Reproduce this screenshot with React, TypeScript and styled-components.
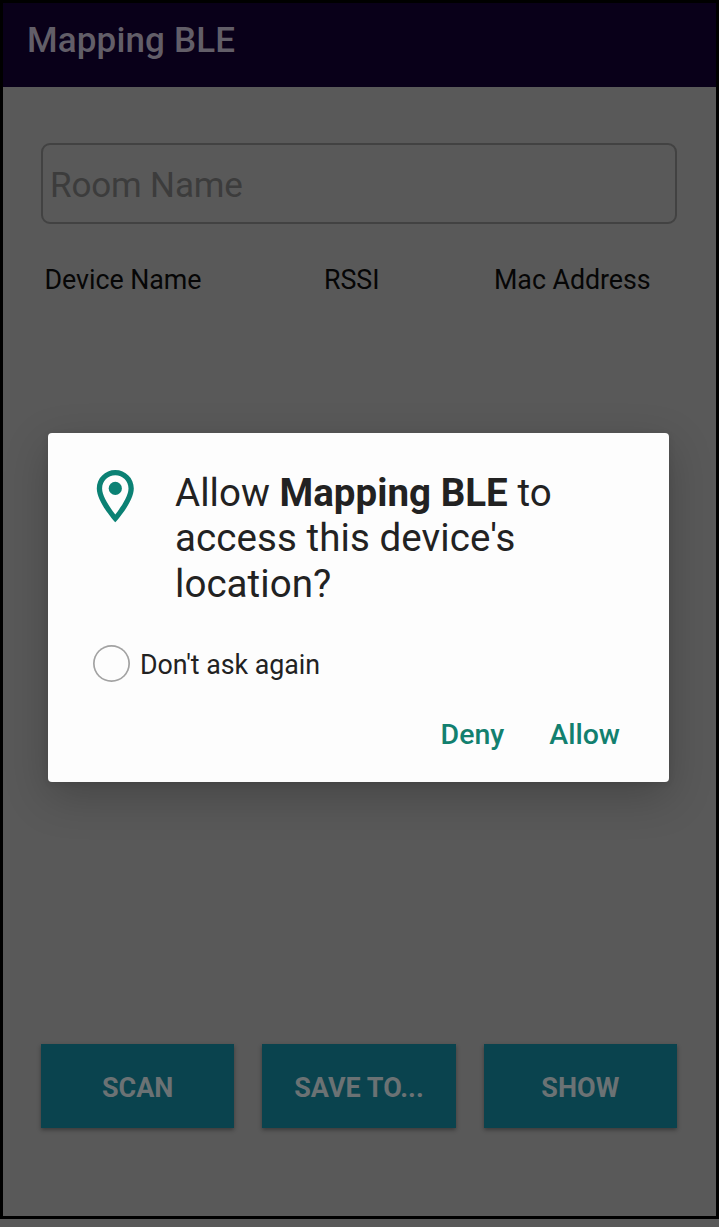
import React from "react";
import styled, { createGlobalStyle } from "styled-components";

const GlobalStyle = createGlobalStyle`
  *, *::before, *::after { box-sizing: border-box; }
  body {
    margin: 0;
    background: #595959;
    font-family: Roboto, "Liberation Sans", sans-serif;
  }
`;

const Page = styled.div`
  height: 1227px;
  width: 719px;
  background: #595959;
`;

const Screen = styled.main`
  position: relative;
  display: flex;
  flex-direction: column;
  height: 1219px;
  border: 3px solid #000;
  background: #595959;
`;

const AppBar = styled.header`
  height: 84px;
  padding: 17px 24px 0;
  background: #090019;
`;

const AppTitle = styled.h1`
  margin: 0;
  font-size: 35px;
  line-height: 42px;
  font-weight: 500;
  letter-spacing: 0.15px;
  color: #625e68;
`;

const Content = styled.div`
  flex: 1;
  display: flex;
  flex-direction: column;
  padding: 56px 39px 88px 38px;
`;

const RoomInput = styled.input`
  height: 81px;
  width: 100%;
  padding: 3px 7px 0;
  border: 2px solid #424242;
  border-radius: 9px;
  background: transparent;
  font: 400 35px Roboto, sans-serif;
  letter-spacing: -0.15px;
  outline: none;
  &::placeholder {
    color: #3c3c3c;
    opacity: 1;
  }
`;

const TableHead = styled.div`
  display: grid;
  grid-template-columns: 279.5px 170px 1fr;
  margin-top: 40px;
  padding-left: 3.5px;
  font-size: 26.8px;
  line-height: 32px;
  letter-spacing: -0.04px;
  color: #060606;
`;

const HeadCell = styled.span`
  white-space: nowrap;
`;

const Actions = styled.div`
  display: grid;
  grid-template-columns: repeat(3, 1fr);
  gap: 28px;
  margin-top: auto;
`;

const ActionButton = styled.button`
  height: 84px;
  padding: 3px 0 0;
  border: 0;
  background: #0a434e;
  box-shadow: 0 2px 4px rgba(0, 0, 0, 0.35);
  font: 700 27px Roboto, sans-serif;
  color: #6b7274;
`;

const Dialog = styled.section`
  position: absolute;
  top: 430px;
  left: 45px;
  width: 621px;
  height: 349px;
  display: flex;
  flex-direction: column;
  padding: 37px 49px 24px 45px;
  border-radius: 4px;
  background: #fdfdfd;
  box-shadow: 0 14px 44px rgba(0, 0, 0, 0.22), 0 2px 6px rgba(0, 0, 0, 0.1);
  color: #222;
`;

const Prompt = styled.div`
  display: flex;
  align-items: flex-start;
`;

const Pin = styled.svg`
  flex: none;
  width: 38px;
  height: 53px;
  margin: 0 41px 0 3px;
`;

const Question = styled.h2`
  margin: 0;
  font-size: 38.5px;
  line-height: 45.3px;
  font-weight: 400;
  white-space: nowrap;
  b {
    font-weight: 700;
  }
`;

const QuestionLine = styled.span<{ $spacing: number }>`
  display: block;
  letter-spacing: ${(p) => p.$spacing}px;
`;

const AskAgain = styled.label`
  display: flex;
  align-items: center;
  gap: 10px;
  margin-top: 39px;
  height: 37px;
  font-size: 26.8px;
  letter-spacing: -0.04px;
`;

const AskLabel = styled.span`
  padding-top: 3px;
`;

const Radio = styled.span`
  width: 37px;
  height: 37px;
  border-radius: 50%;
  box-shadow: inset 0 0 0 1.7px #a2a2a2;
`;

const DialogActions = styled.div`
  display: flex;
  justify-content: flex-end;
  gap: 45px;
  margin-top: auto;
`;

const TextButton = styled.button`
  padding: 0;
  border: 0;
  background: none;
  font: 500 28.5px/46px Roboto, sans-serif;
  color: #12806f;
`;

export default function App() {
  return (
    <Page>
      <GlobalStyle />
      <Screen>
        <AppBar>
          <AppTitle>Mapping BLE</AppTitle>
        </AppBar>
        <Content>
          <RoomInput placeholder="Room Name" />
          <TableHead>
            <HeadCell>Device Name</HeadCell>
            <HeadCell>RSSI</HeadCell>
            <HeadCell>Mac Address</HeadCell>
          </TableHead>
          <Actions>
            <ActionButton>SCAN</ActionButton>
            <ActionButton>SAVE TO...</ActionButton>
            <ActionButton>SHOW</ActionButton>
          </Actions>
        </Content>
        <Dialog role="dialog">
          <Prompt>
            <Pin viewBox="0 0 38 53" fill="none">
              <path
                fillRule="evenodd"
                d="M19.3 0C9 0 0.8 8.2 0.8 18.5C0.8 32.4 19.3 52.3 19.3 52.3C19.3 52.3 37.8 32.4 37.8 18.5C37.8 8.2 29.6 0 19.3 0ZM6.1 18.5C6.1 11.2 12 5.3 19.3 5.3C26.6 5.3 32.5 11.2 32.5 18.5C32.5 26.1 24.9 37.4 19.3 44.5C13.8 37.5 6.1 26 6.1 18.5Z"
                fill="#0b8174"
              />
              <circle cx="19.3" cy="18.4" r="6.6" fill="#0b8174" />
            </Pin>
            <Question>
              <QuestionLine $spacing={0.03}>
                Allow <b>Mapping BLE</b> to
              </QuestionLine>
              <QuestionLine $spacing={0.08}>access this device's</QuestionLine>
              <QuestionLine $spacing={0.05}>location?</QuestionLine>
            </Question>
          </Prompt>
          <AskAgain>
            <Radio />
            <AskLabel>Don't ask again</AskLabel>
          </AskAgain>
          <DialogActions>
            <TextButton>Deny</TextButton>
            <TextButton>Allow</TextButton>
          </DialogActions>
        </Dialog>
      </Screen>
    </Page>
  );
}
